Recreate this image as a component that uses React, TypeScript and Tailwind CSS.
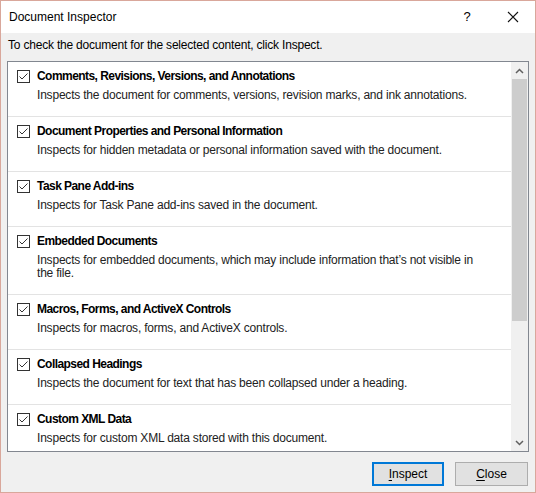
import React from 'react';

type Item = { title: string; desc: string };

const items: Item[] = [
  { title: 'Comments, Revisions, Versions, and Annotations', desc: 'Inspects the document for comments, versions, revision marks, and ink annotations.' },
  { title: 'Document Properties and Personal Information', desc: 'Inspects for hidden metadata or personal information saved with the document.' },
  { title: 'Task Pane Add-ins', desc: 'Inspects for Task Pane add-ins saved in the document.' },
  {
    title: 'Embedded Documents',
    desc: 'Inspects for embedded documents, which may include information that\u2019s not visible in the file.',
  },
  { title: 'Macros, Forms, and ActiveX Controls', desc: 'Inspects for macros, forms, and ActiveX controls.' },
  { title: 'Collapsed Headings', desc: 'Inspects the document for text that has been collapsed under a heading.' },
  { title: 'Custom XML Data', desc: 'Inspects for custom XML data stored with this document.' },
];

const CheckBox = () => (
  <div className="mt-[1px] flex h-[13px] w-[13px] shrink-0 items-center justify-center border border-[#333333] bg-white">
    <svg width="11" height="11" viewBox="0 0 11 11">
      <path d="M1.5 5.5 L4 8 L9.5 2.5" fill="none" stroke="#333333" strokeWidth="1" />
    </svg>
  </div>
);

const Row = ({ title, desc }: Item) => (
  <div className="flex gap-[7px] border-b border-[#e3e3e3] pt-[7px] pb-[14px] pl-[9px] pr-[21px]">
    <CheckBox />
    <div className="flex flex-col">
      <span className="text-[12px] leading-[15px] font-bold tracking-[-0.55px] text-black">{title}</span>
      <span className="mt-[5px] text-[12px] leading-[13px] tracking-[-0.2px] text-[#222222]">{desc}</span>
    </div>
  </div>
);

export default function App() {
  return (
    <div
      className="flex h-[493px] w-[536px] flex-col border border-[#d9a79b] bg-[#f0f0f0] text-black"
      style={{ fontFamily: '"Liberation Sans", Arial, sans-serif' }}
    >
      <div className="flex h-[32px] items-center bg-white pl-[8px]">
        <span className="flex-1 text-[12px]">Document Inspector</span>
        <span className="mr-[14px] w-[20px] text-center text-[13px]">?</span>
        <div className="flex w-[44px] items-center justify-center">
          <svg width="12" height="12" viewBox="0 0 12 12">
            <path d="M1 1 L11 11 M11 1 L1 11" stroke="#111111" strokeWidth="1.1" />
          </svg>
        </div>
      </div>

      <div className="px-[7px] pt-[5px] text-[12px] leading-[15px] tracking-[-0.2px]">
        To check the document for the selected content, click Inspect.
      </div>

      <div className="mx-[6px] mt-[8px] flex h-[391px] border border-[#828790] bg-white">
        <div className="flex-1 overflow-hidden">
          {items.map((it) => (
            <Row key={it.title} {...it} />
          ))}
        </div>
        <div className="flex w-[17px] flex-col bg-[#f0f0f0]">
          <div className="flex h-[17px] items-center justify-center">
            <svg width="9" height="6" viewBox="0 0 9 6">
              <path d="M1 5 L4.5 1.5 L8 5" fill="none" stroke="#606060" strokeWidth="1.5" />
            </svg>
          </div>
          <div className="mx-[1px] h-[242px] bg-[#cdcdcd]" />
          <div className="flex-1" />
          <div className="flex h-[17px] items-center justify-center">
            <svg width="9" height="6" viewBox="0 0 9 6">
              <path d="M1 1 L4.5 4.5 L8 1" fill="none" stroke="#606060" strokeWidth="1.5" />
            </svg>
          </div>
        </div>
      </div>

      <div className="mt-[10px] flex justify-end gap-[11px] pr-[7px]">
        <button
          type="button"
          className="h-[24px] w-[72px] border-2 border-[#0078d7] bg-[#e1e1e1] text-[12px]"
        >
          <span className="underline underline-offset-2">I</span>nspect
        </button>
        <button
          type="button"
          className="h-[24px] w-[73px] border border-[#adadad] bg-[#e1e1e1] text-[12px]"
        >
          <span className="underline underline-offset-2">C</span>lose
        </button>
      </div>
    </div>
  );
}
